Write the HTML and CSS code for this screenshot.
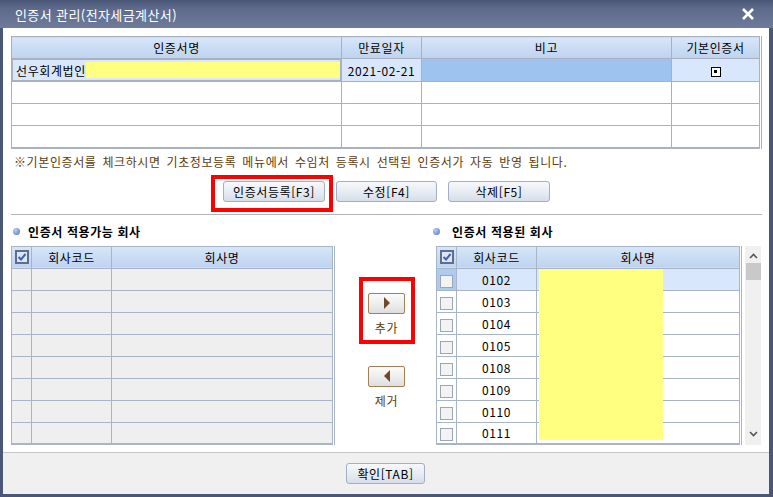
FILE: index.html
```html
<!DOCTYPE html>
<html lang="ko">
<head>
    <meta charset="UTF-8">
    <title>인증서 관리</title>
    <link rel="stylesheet" href="styles.css">
</head>
<body>
    <div class="dialog">
        <div class="titlebar">
            <span class="title">인증서 관리(전자세금계산서)</span>
            <svg class="close" width="14" height="14" viewBox="0 0 14 14"><path d="M2 2L12 12M12 2L2 12" stroke="#fff" stroke-width="2.6"/></svg>
        </div>
        <div class="main">
            <table class="grid cert">
                <colgroup>
                    <col style="width:330px"><col style="width:80px"><col style="width:250px"><col style="width:89px">
                </colgroup>
                <tr><th>인증서명</th><th>만료일자</th><th>비고</th><th>기본인증서</th></tr>
                <tr class="sel">
                    <td class="name"><span>선우회계법인</span><span class="mask"></span></td>
                    <td class="c">2021-02-21</td>
                    <td class="cur"></td>
                    <td class="c"><span class="pick"></span></td>
                </tr>
                <tr><td></td><td></td><td></td><td></td></tr>
                <tr><td></td><td></td><td></td><td></td></tr>
                <tr><td></td><td></td><td></td><td></td></tr>
            </table>
            <p class="note">※기본인증서를 체크하시면 기초정보등록 메뉴에서 수임처 등록시 선택된 인증서가 자동 반영 됩니다.</p>
            <div class="actions">
                <button class="btn w102 marked">인증서등록[F3]</button>
                <button class="btn w101">수정[F4]</button>
                <button class="btn w102">삭제[F5]</button>
            </div>
            <div class="split">
                <div class="panel">
                    <h4 class="caption left">인증서 적용가능 회사</h4>
                    <table class="grid company avail">
                        <colgroup><col style="width:20px"><col style="width:80px"><col></colgroup>
                        <tr><th><span class="allbox"><svg width="14" height="14" viewBox="0 0 14 14"><rect x="1" y="1" width="12" height="12" fill="#dfe6f3" stroke="#5f6d8e" stroke-width="2"/><path d="M3.5 7L6 9.5L10.5 4" fill="none" stroke="#3d62b8" stroke-width="2"/></svg></span></th><th>회사코드</th><th>회사명</th></tr>
                        <tr><td></td><td></td><td></td></tr>
                        <tr><td></td><td></td><td></td></tr>
                        <tr><td></td><td></td><td></td></tr>
                        <tr><td></td><td></td><td></td></tr>
                        <tr><td></td><td></td><td></td></tr>
                        <tr><td></td><td></td><td></td></tr>
                        <tr><td></td><td></td><td></td></tr>
                        <tr><td></td><td></td><td></td></tr>
                    </table>
                </div>
                <div class="mover">
                    <div class="move marked">
                        <button class="arrow"><svg width="8" height="12" viewBox="0 0 8 12"><path d="M1 0L7 6L1 12Z" fill="#6e4a2a"/></svg></button>
                        <span class="label">추가</span>
                    </div>
                    <div class="move">
                        <button class="arrow"><svg width="8" height="12" viewBox="0 0 8 12"><path d="M7 0L1 6L7 12Z" fill="#6e4a2a"/></svg></button>
                        <span class="label">제거</span>
                    </div>
                </div>
                <div class="panel">
                    <h4 class="caption right">인증서 적용된 회사</h4>
                    <div class="gridwrap">
                        <table class="grid company applied">
                            <colgroup><col style="width:20px"><col style="width:80px"><col></colgroup>
                            <tr><th><span class="allbox"><svg width="14" height="14" viewBox="0 0 14 14"><rect x="1" y="1" width="12" height="12" fill="#dfe6f3" stroke="#5f6d8e" stroke-width="2"/><path d="M3.5 7L6 9.5L10.5 4" fill="none" stroke="#3d62b8" stroke-width="2"/></svg></span></th><th>회사코드</th><th>회사명</th></tr>
                            <tr class="sel"><td class="chk"><span class="box"></span></td><td class="c">0102</td><td></td></tr>
                            <tr><td class="chk"><span class="box"></span></td><td class="c">0103</td><td></td></tr>
                            <tr><td class="chk"><span class="box"></span></td><td class="c">0104</td><td></td></tr>
                            <tr><td class="chk"><span class="box"></span></td><td class="c">0105</td><td></td></tr>
                            <tr><td class="chk"><span class="box"></span></td><td class="c">0108</td><td></td></tr>
                            <tr><td class="chk"><span class="box"></span></td><td class="c">0109</td><td></td></tr>
                            <tr><td class="chk"><span class="box"></span></td><td class="c">0110</td><td></td></tr>
                            <tr><td class="chk"><span class="box"></span></td><td class="c">0111</td><td></td></tr>
                        </table>
                        <div class="scroll">
                            <svg class="up" width="9" height="6" viewBox="0 0 9 6"><path d="M1 5L4.5 1.5L8 5" fill="none" stroke="#555" stroke-width="1.6"/></svg>
                            <div class="thumb"></div>
                            <svg class="down" width="9" height="6" viewBox="0 0 9 6"><path d="M1 1L4.5 4.5L8 1" fill="none" stroke="#555" stroke-width="1.6"/></svg>
                        </div>
                        <div class="blot"></div>
                    </div>
                </div>
            </div>
        </div>
        <div class="footer">
            <button class="btn w78">확인[TAB]</button>
        </div>
    </div>
</body>
</html>
```

FILE: styles.css
```css
* {
    box-sizing: border-box;
}
body {
    margin: 0;
    font-family: "Noto Sans CJK KR", "Liberation Sans", sans-serif;
    font-size: 12px;
    letter-spacing: 0.6px;
    color: #000;
}
.dialog {
    width: 773px;
    height: 497px;
    display: flex;
    flex-direction: column;
    background-color: #4b5777;
    padding: 0 4px 3px 3px;
}
.titlebar {
    height: 28px;
    margin: 0 -4px 0 -3px;
    padding: 0 18px 0 15px;
    display: flex;
    align-items: center;
    justify-content: space-between;
    background: linear-gradient(to bottom, #4a5676 0%, #5d6a8b 30%, #6f7b9b 100%);
    color: #fff;
    font-size: 13px;
    letter-spacing: 0.4px;
}
.main {
    flex: 1;
    background-color: #fff;
    padding: 8px 8px 0 8px;
}
.grid {
    border-collapse: collapse;
    table-layout: fixed;
    border: 1px solid #a9b0c0;
}
.grid th, .grid td {
    height: 22px;
    padding: 0;
    border: 1px solid #a9b0c0;
    font-weight: normal;
    white-space: nowrap;
    overflow: hidden;
}
.grid th {
    background: linear-gradient(to bottom, #d7e6f9 0%, #bed3ef 100%);
    text-align: center;
}
.cert {
    width: 750px;
    border-right: 3px double #a9b0c0;
    border-bottom: 2px solid #a9b0c0;
}
.cert .sel td {
    background-color: #d8e7fb;
}
.cert .sel td.cur {
    background-color: #9dc3ee;
}
.c {
    text-align: center;
}
.name {
    display: flex;
    align-items: center;
    padding-left: 3px !important;
}
.name .mask {
    flex: 1;
    height: 16px;
    background-color: #ffff80;
}
.pick {
    display: inline-block;
    width: 10px;
    height: 10px;
    border: 1.5px solid #000;
    background: #fff;
    vertical-align: middle;
    position: relative;
}
.pick::after {
    content: "";
    position: absolute;
    left: 2px;
    top: 2px;
    width: 3px;
    height: 3px;
    background: #000;
}
.note {
    margin: 5px 0 0 3px;
    line-height: 16px;
    color: #603a08;
    word-spacing: 2px;
}
.actions {
    display: flex;
    justify-content: center;
    gap: 11px;
    margin-top: 11px;
    padding-bottom: 12px;
    border-bottom: 1px solid #b4b4b4;
    margin-right: -1px;
}
.btn {
    height: 21px;
    padding: 0;
    border: 1px solid #a4aec4;
    border-radius: 3px;
    background: linear-gradient(to bottom, #f6f8fb 0%, #e6ebf3 55%, #d7dee9 100%);
    font-family: inherit;
    font-size: 12px;
    letter-spacing: 0.6px;
    color: #000;
}
.w102 { width: 102px; }
.w101 { width: 101px; }
.w78 { width: 79px; height: 21px; }
.marked {
    position: relative;
}
.actions .marked::after {
    content: "";
    position: absolute;
    top: -7px;
    bottom: -11px;
    left: -13px;
    right: -9px;
    border: 4px solid #f00;
}
.split {
    display: grid;
    grid-template-columns: 324px 101px 325px;
    margin-top: 9px;
}
.caption {
    margin: 0 0 6px;
    height: 16px;
    line-height: 16px;
    font-size: 12px;
    font-weight: bold;
    display: flex;
    align-items: center;
    gap: 8px;
}
.caption::before {
    content: "";
    width: 7px;
    height: 7px;
    border-radius: 50%;
    background: radial-gradient(circle at 35% 35%, #b8cdf0 0%, #6c8fcf 70%, #5a7cbc 100%);
}
.caption.left {
    padding-left: 2px;
}
.caption.right {
    margin-left: -3px;
    gap: 12px;
}
.company {
    border-right: 3px double #a8b4c8;
    border-bottom: 2px solid #a8b4c8;
}
.company th, .company td {
    border-color: #a8b4c8;
}
.avail {
    width: 324px;
}
.avail td {
    background-color: #efefef;
}
.allbox {
    display: flex;
    justify-content: center;
    align-items: center;
}
.allbox svg {
    display: block;
}
.mover {
    display: flex;
    flex-direction: column;
    align-items: center;
    padding-top: 69px;
    gap: 30px;
}
.move {
    display: flex;
    flex-direction: column;
    align-items: center;
    width: 37px;
    margin-left: 2px;
}
.arrow {
    width: 37px;
    height: 21px;
    padding: 0;
    border: 1px solid #a57e58;
    border-radius: 2px;
    background: linear-gradient(to bottom, #fbfbfb 0%, #ebebeb 60%, #dedede 100%);
    display: flex;
    align-items: center;
    justify-content: center;
}
.label {
    margin-top: 6px;
    line-height: 16px;
    color: #5a3a10;
}
.move.marked::after {
    content: "";
    position: absolute;
    top: -16px;
    bottom: -8px;
    left: -9px;
    right: -10px;
    border: 4px solid #f00;
}
.gridwrap {
    position: relative;
    display: flex;
}
.applied {
    width: 306px;
}
.applied .sel td {
    background-color: #d8e7fb;
}
.applied .sel td.chk {
    background-color: #adcaef;
}
.chk {
    text-align: center;
}
.box {
    display: inline-block;
    width: 13px;
    height: 13px;
    border: 1px solid #9ca6ba;
    background-color: #f3f3f3;
    vertical-align: middle;
}
.scroll {
    width: 16px;
    margin-left: 3px;
    background-color: #f0f0f0;
    display: flex;
    flex-direction: column;
    align-items: center;
}
.scroll .up {
    margin-top: 7px;
}
.scroll .thumb {
    width: 15px;
    height: 17px;
    margin-top: 4px;
    background-color: #c9c9c9;
}
.scroll .down {
    margin-top: auto;
    margin-bottom: 8px;
}
.blot {
    position: absolute;
    left: 103px;
    top: 23px;
    width: 124px;
    height: 171px;
    background-color: #ffff80;
}
.footer {
    height: 42px;
    background-color: #f0f0f0;
    border-top: 1px solid #c6c6c6;
    display: flex;
    justify-content: center;
    align-items: center;
    padding-right: 1px;
}
```
